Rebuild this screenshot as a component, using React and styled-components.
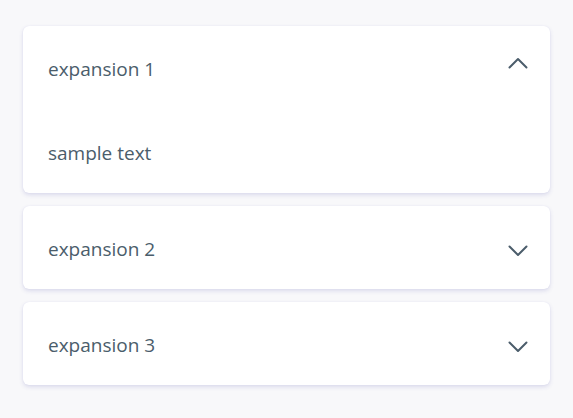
import { useState } from 'react'
import styled, { createGlobalStyle } from 'styled-components'

const GlobalStyle = createGlobalStyle`
    body {
        margin: 0;
        background: #f8f8fa;
        font-family: "Open Sans", "Noto Sans", sans-serif;
    }
`

const items = [
    { title: 'expansion 1', body: 'sample text' },
    { title: 'expansion 2', body: 'sample text' },
    { title: 'expansion 3', body: 'sample text' },
]

export default function App() {
    const [open, setOpen] = useState(0)

    return (
        <Page>
            <GlobalStyle />
            {items.map((item, index) => (
                <Panel key={item.title}>
                    <Header $open={open === index} onClick={() => setOpen(open === index ? -1 : index)}>
                        <Title>{item.title}</Title>
                        <Chevron $open={open === index} width="20" height="12" viewBox="0 0 20 12">
                            <polyline points="1.5,1.5 10,10 18.5,1.5" />
                        </Chevron>
                    </Header>
                    {open === index && <Body>{item.body}</Body>}
                </Panel>
            ))}
        </Page>
    )
}

const Page = styled.div`
    display: flex;
    flex-direction: column;
    gap: 13px;
    padding: 26px 23px;
`

const Panel = styled.section`
    background: #fff;
    border-radius: 6px;
    box-shadow: 0 2px 4px rgba(70, 70, 170, 0.16), 0 0 1px rgba(70, 70, 170, 0.12);
`

const Header = styled.div`
    display: flex;
    align-items: ${p => p.$open ? 'flex-start' : 'center'};
    justify-content: space-between;
    height: ${p => p.$open ? '88px' : '83px'};
    box-sizing: border-box;
    padding: ${p => p.$open ? '31px 22px 0 25px' : '2px 22px 0 25px'};
    cursor: pointer;
`

const Title = styled.span`
    font-size: 19px;
    line-height: 24px;
    color: #4b5d6b;
`

const Chevron = styled.svg`
    fill: none;
    stroke: #4b5d6b;
    stroke-width: 2;
    stroke-linecap: round;
    stroke-linejoin: round;
    margin-top: ${p => p.$open ? '0' : '4px'};
    transform: ${p => p.$open ? 'rotate(180deg)' : 'none'};
`

const Body = styled.div`
    padding: 27px 25px 28px;
    font-size: 19px;
    line-height: 24px;
    color: #4b5d6b;
`
